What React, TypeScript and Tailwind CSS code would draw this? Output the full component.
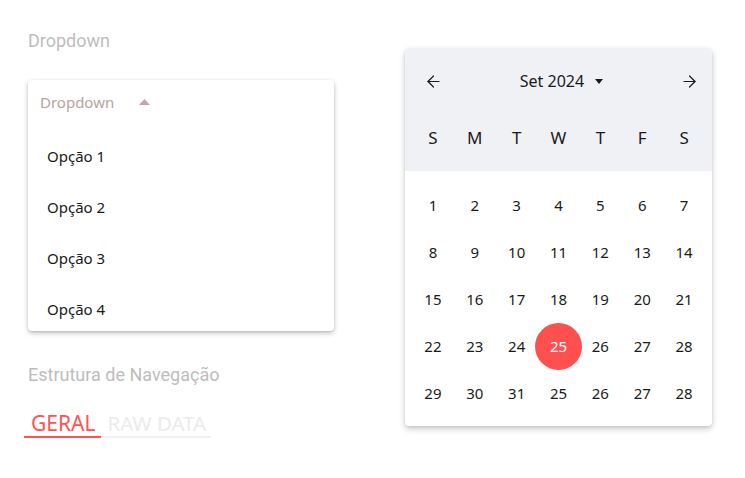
import { ArrowLeft, ArrowRight } from "lucide-react"

const options = ["Opção 1", "Opção 2", "Opção 3", "Opção 4"]
const weekdays = ["S", "M", "T", "W", "T", "F", "S"]
const days = [
  1, 2, 3, 4, 5, 6, 7,
  8, 9, 10, 11, 12, 13, 14,
  15, 16, 17, 18, 19, 20, 21,
  22, 23, 24, 25, 26, 27, 28,
  29, 30, 31, 25, 26, 27, 28,
]

function DropdownCard() {
  return (
    <div className="mt-[27px] h-[251px] w-[306px] overflow-hidden rounded-[4px] bg-white shadow-[0_2px_5px_rgba(0,0,0,0.25),0_1px_2px_rgba(0,0,0,0.08)]">
      {/* Trigger */}
      <div className="flex h-[44px] items-center px-[12px]">
        <span className="text-[15px] text-[#bb9f9f]">Dropdown</span>
        <svg width="11" height="6" viewBox="0 0 11 6" className="ml-[25px]">
          <path d="M0 6 L5.5 0 L11 6 Z" fill="#c2a9a9" />
        </svg>
      </div>

      {/* Options */}
      <ul className="pt-[7px]">
        {options.map((opt) => (
          <li key={opt} className="flex h-[51px] items-center pl-[19px] text-[15px] text-[#1a1a1a]">
            {opt}
          </li>
        ))}
      </ul>
    </div>
  )
}

function Tabs() {
  return (
    <div className="mt-[23px] flex -ml-[4px]">
      <div className="border-b-2 border-[#ff5252] pl-[7px] pr-[6px] text-[21px] leading-[26px] text-[#ff5252]">
        GERAL
      </div>
      <div className="border-b-2 border-[#f2f2f2] pl-[6px] pr-[5px] text-[20.5px] leading-[26px] text-[#ebebeb]">
        RAW DATA
      </div>
    </div>
  )
}

function Calendar() {
  return (
    <div className="mt-[48px] h-[378px] w-[307px] overflow-hidden rounded-[4px] bg-white shadow-[0_3px_6px_rgba(0,0,0,0.2),0_1px_3px_rgba(0,0,0,0.08)]">
      {/* Header */}
      <div className="bg-[#f0f1f5] px-[7px] pb-[9px]">
        <div className="flex h-[66px] items-center justify-between pl-[12px] pr-[6px]">
          <ArrowLeft size={19} strokeWidth={1.5} className="text-[#1a1a1a]" />
          <div className="flex items-center gap-[11px]">
            <span className="text-[16px] text-[#1a1a1a]">Set 2024</span>
            <svg width="8" height="5" viewBox="0 0 8 5">
              <path d="M0 0 L8 0 L4 5 Z" fill="#1a1a1a" />
            </svg>
          </div>
          <ArrowRight size={19} strokeWidth={1.5} className="text-[#1a1a1a]" />
        </div>
        <div className="grid h-[48px] grid-cols-7 items-center">
          {weekdays.map((d, i) => (
            <div key={i} className="text-center text-[17px] text-[#1a1a1a]">
              {d}
            </div>
          ))}
        </div>
      </div>

      {/* Days */}
      <div className="grid grid-cols-7 px-[7px] pt-[11px]">
        {days.map((d, i) => {
          const selected = i === 24
          return (
            <div key={i} className="flex h-[47px] items-center justify-center">
              {selected ? (
                <div className="flex h-[47px] w-[47px] shrink-0 items-center justify-center rounded-full bg-[#ff5050] text-[15px] text-white">
                  {d}
                </div>
              ) : (
                <span className="text-[15px] text-[#1a1a1a]">{d}</span>
              )}
            </div>
          )
        })}
      </div>
    </div>
  )
}

export default function App() {
  return (
    <div className="flex h-[478px] w-[745px] bg-white" style={{ fontFamily: '"Noto Sans", sans-serif' }}>
      <div className="ml-[28px] flex w-[306px] flex-col pt-[29px]">
        <h2 className="font-['Roboto',sans-serif] text-[18px] leading-[24px] text-[#bdbdbd]">Dropdown</h2>
        <DropdownCard />
        <h2 className="mt-[32px] font-['Roboto',sans-serif] text-[18px] leading-[24px] text-[#bdbdbd]">
          Estrutura de Navegação
        </h2>
        <Tabs />
      </div>
      <div className="ml-[71px]">
        <Calendar />
      </div>
    </div>
  )
}
